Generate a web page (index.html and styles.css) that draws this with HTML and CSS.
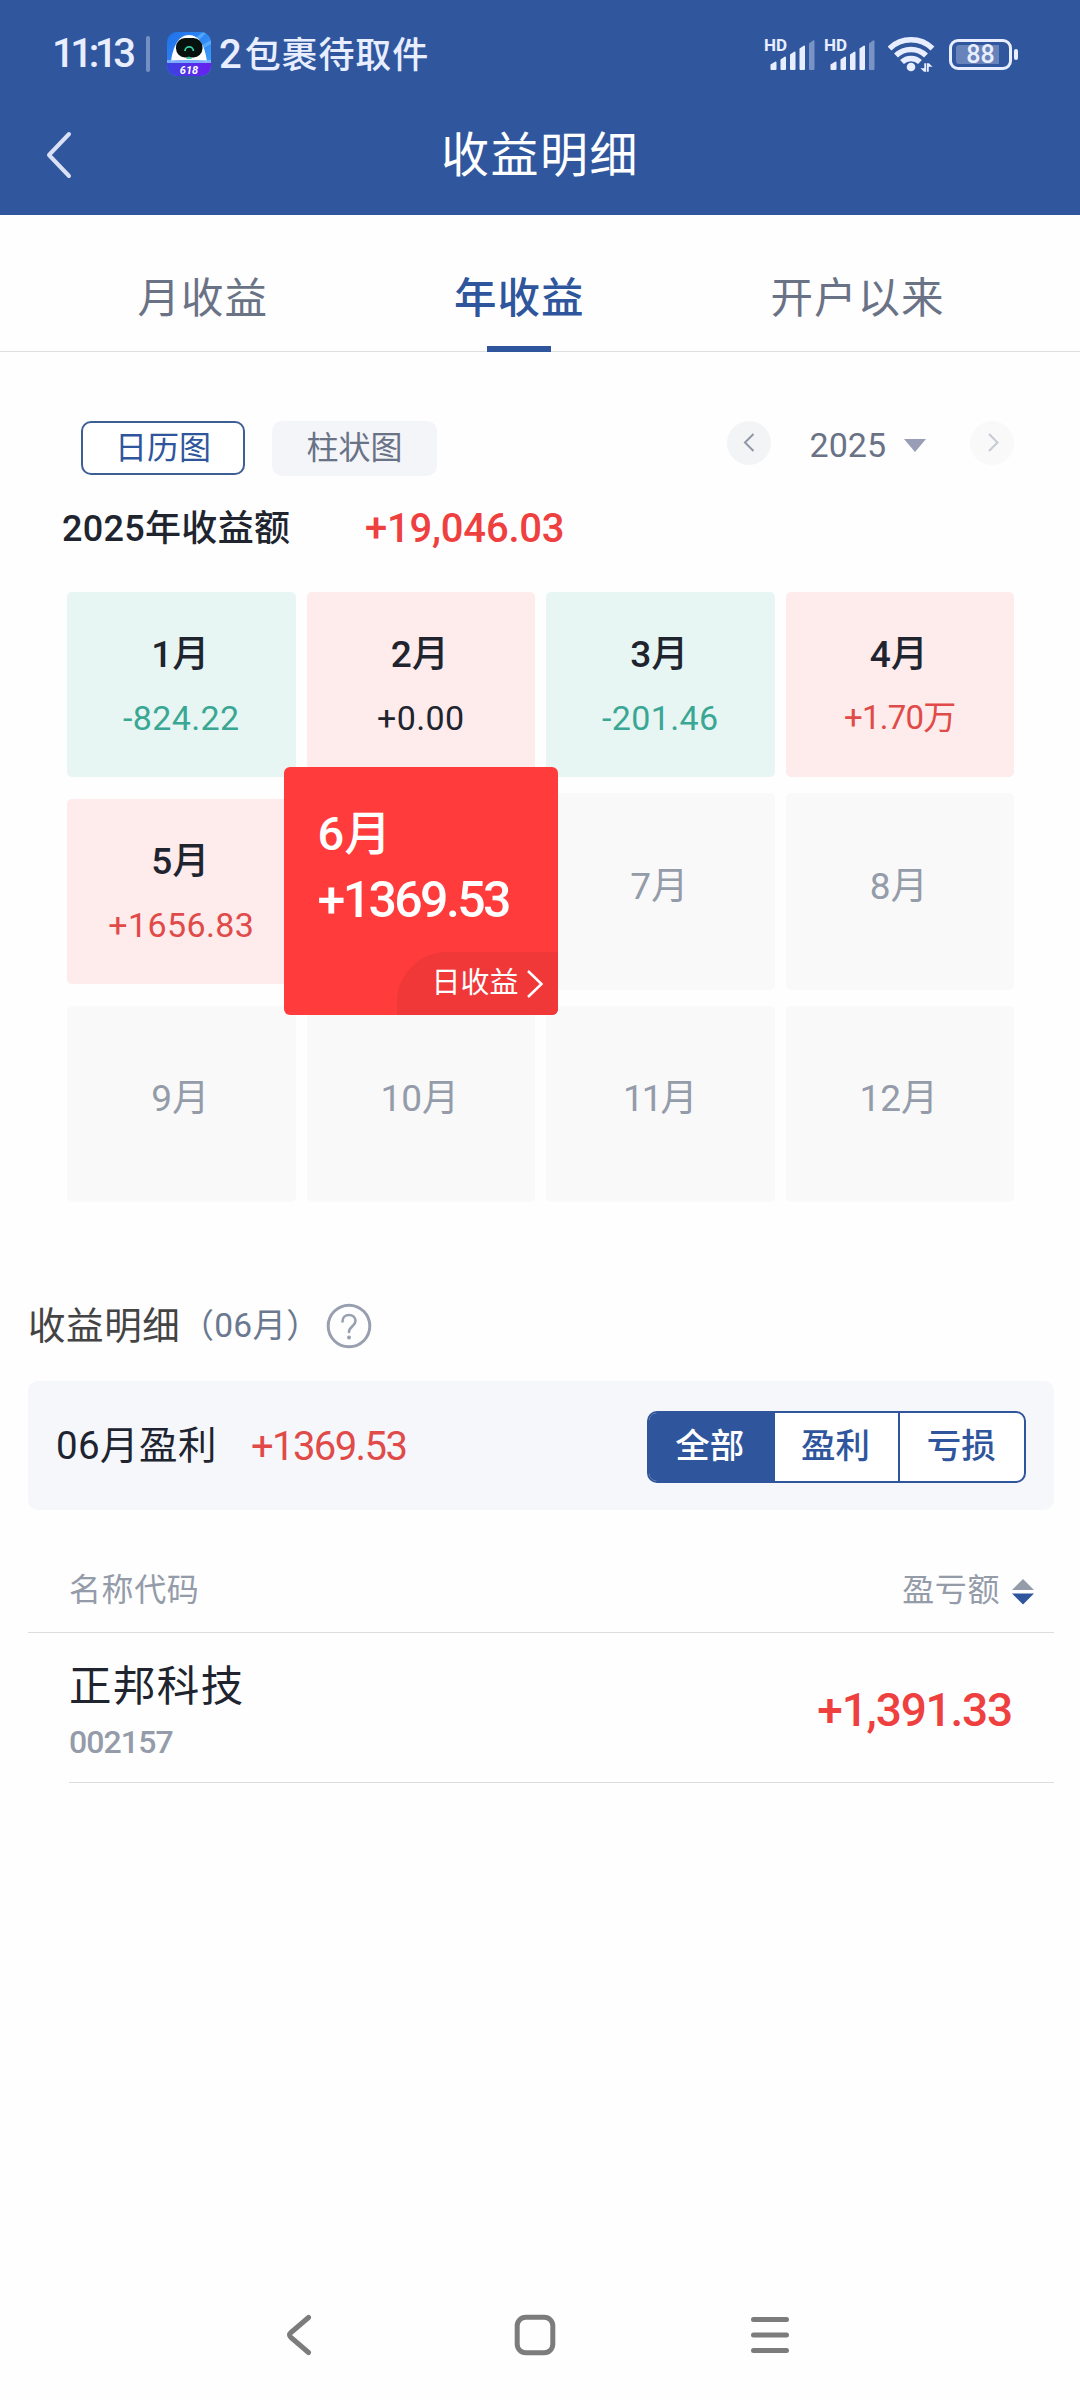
FILE: index.html
```html
<!DOCTYPE html>
<html lang="zh-CN">
<head>
  <meta charset="UTF-8">
  <meta name="viewport" content="width=device-width, initial-scale=1.0">
  <title>收益明细</title>
  <link rel="stylesheet" href="styles.css">
</head>
<body>

  <!-- Header -->
  <header class="header">
    <div class="status-bar">
      <span class="time">11:13</span>
      <span class="divider"></span>
      <svg class="app-icon" width="44" height="44" viewBox="0 0 44 44">
        <defs>
          <linearGradient id="sky" x1="0" y1="0" x2="1" y2="1">
            <stop offset="0" stop-color="#1f6fe8"/>
            <stop offset="1" stop-color="#3fa4ff"/>
          </linearGradient>
          <linearGradient id="band" x1="0" y1="0" x2="1" y2="0">
            <stop offset="0" stop-color="#3a43e0"/>
            <stop offset="1" stop-color="#6a1ff0"/>
          </linearGradient>
          <clipPath id="round"><rect width="44" height="44" rx="10"/></clipPath>
        </defs>
        <g clip-path="url(#round)">
          <rect width="44" height="44" fill="url(#sky)"/>
          <path d="M26 8L36 0h4L28 12zM34 14l10-6v4l-9 5z" fill="#6fbaff" opacity=".6"/>
          <path d="M4 30C5 21 7 16 9 12 12 6 17 3 22 3s10 3 13 9c2 4 4 9 5 18-5-2-10-2-18-2S9 28 4 30z" fill="#fff"/>
          <rect x="0" y="28" width="44" height="4" fill="#8fb4ff" opacity=".8"/>
          <rect x="9" y="6" width="26.500" height="19.500" rx="9" fill="#07120f"/>
          <path d="M18 19a4.200 4.200 0 0 1 8.400 0" fill="none" stroke="#33cfa5" stroke-width="1.800"/>
          <path d="M19 27q3-5 6 0z" fill="#33cfa5"/>
          <rect y="31" width="44" height="13" fill="url(#band)"/>
          <text x="22" y="41.500" class="app-icon-text">618</text>
        </g>
      </svg>
      <span class="notice"><span class="count">2</span>包裹待取件</span>

      <svg class="signal" width="52" height="46" viewBox="-2 -6 52 46">
        <text x="-1" y="13.500" class="hd">HD</text>
        <path d="M5.500 32v-4.500l5-3q1 0 1 1v6.500q0 1-1 1h-4q-1 0-1-1zM15.500 32v-9.500l4.500-3q1 0 1 1v11.500q0 1-1 1h-3.500q-1 0-1-1zM25 32V17.500l4.500-3q1 0 1 1v16.500q0 1-1 1H26q-1 0-1-1zM34.500 32V11.500l4.500-3q1 0 1 1v22.500q0 1-1 1h-3.500q-1 0-1-1z"/>
        <path d="M44 31.500V6.500l4-3q1.500-.5 1.500.5v28q0 1-1 1H45q-1 0-1-1z" opacity=".4"/>
      </svg>
      <svg class="signal second" width="52" height="46" viewBox="-2 -6 52 46">
        <text x="-1" y="13.500" class="hd">HD</text>
        <path d="M5.500 32v-4.500l5-3q1 0 1 1v6.500q0 1-1 1h-4q-1 0-1-1zM15.500 32v-9.500l4.500-3q1 0 1 1v11.500q0 1-1 1h-3.500q-1 0-1-1zM25 32V17.500l4.500-3q1 0 1 1v16.500q0 1-1 1H26q-1 0-1-1zM34.500 32V11.500l4.500-3q1 0 1 1v22.500q0 1-1 1h-3.500q-1 0-1-1z"/>
        <path d="M44 31.500V6.500l4-3q1.500-.5 1.500.5v28q0 1-1 1H45q-1 0-1-1z" opacity=".4"/>
      </svg>
      <svg class="wifi" width="47" height="36" viewBox="0 0 47 36">
        <g fill="none" stroke="#e8eeff" stroke-width="5.500">
          <path d="M1.500 12.500a31 31 0 0 1 43 0"/>
          <path d="M8 19.500a21.500 21.500 0 0 1 30 0"/>
          <path d="M14 26a13 13 0 0 1 18 0"/>
        </g>
        <circle cx="23" cy="31" r="4.300"/>
        <path d="M36 27h2.500v9H36l-4-4h4zM41 36h-2.500v-9H41l4 4h-4z" class="wifi-arrows"/>
      </svg>
      <span class="battery"><span class="battery-level"></span><span class="battery-text">88</span></span>
    </div>

    <div class="title-bar">
      <svg class="back" width="28" height="50" viewBox="0 0 28 50">
        <path d="M24 4L4 25l20 21" fill="none" stroke="#dbe1f4" stroke-width="4" stroke-linecap="round" stroke-linejoin="round"/>
      </svg>
      <h1>收益明细</h1>
    </div>
  </header>

  <!-- Tabs -->
  <nav class="tabs">
    <a class="tab">月收益</a>
    <a class="tab active">年收益</a>
    <a class="tab">开户以来</a>
  </nav>

  <!-- Calendar -->
  <section class="calendar">
    <div class="toolbar">
      <button class="view-btn active">日历图</button>
      <button class="view-btn">柱状图</button>
      <div class="year-picker">
        <span class="circle">
          <svg width="14" height="20" viewBox="0 0 14 20"><path d="M11.500 1L3 9.500l8.500 8.500" fill="none" stroke="#8f96a6" stroke-width="2"/></svg>
        </span>
        <span class="year">2025</span>
        <span class="caret"></span>
        <span class="circle disabled">
          <svg width="14" height="20" viewBox="0 0 14 20"><path d="M4 1l8.500 8.500L4 18" fill="none" stroke="#c6cad3" stroke-width="2"/></svg>
        </span>
      </div>
    </div>

    <div class="summary">
      <span class="summary-label">2025年收益额</span>
      <span class="summary-value">+19,046.03</span>
    </div>

    <div class="months">
      <div class="month loss"><b>1月</b><span>-824.22</span></div>
      <div class="month gain flat"><b>2月</b><span>+0.00</span></div>
      <div class="month loss"><b>3月</b><span>-201.46</span></div>
      <div class="month gain"><b>4月</b><span class="short">+1.70万</span></div>
      <div class="month gain"><b>5月</b><span>+1656.83</span></div>
      <div class="month-slot">
        <div class="month-selected">
          <b>6月</b>
          <span class="amount">+1369.53</span>
          <span class="daily">日收益
            <svg width="18" height="28" viewBox="0 0 18 28"><path d="M2 1l13.500 13L2 27" fill="none" stroke="#fff" stroke-width="2.500"/></svg>
          </span>
        </div>
      </div>
      <div class="month"><b>7月</b></div>
      <div class="month"><b>8月</b></div>
      <div class="month"><b>9月</b></div>
      <div class="month"><b>10月</b></div>
      <div class="month"><b class="tight">11月</b></div>
      <div class="month"><b>12月</b></div>
    </div>
  </section>

  <!-- Details -->
  <section class="details">
    <div class="details-title">
      <h2>收益明细</h2>
      <span class="period">（06月）</span>
      <svg class="help" width="46" height="46" viewBox="0 0 46 46">
        <circle cx="23" cy="23" r="20.800" fill="none" stroke="#98a0b0" stroke-width="3"/>
        <path d="M16.500 18.500c0-4 2.800-6.500 6.500-6.500s6.500 2.400 6.500 6c0 5-6.500 5.500-6.500 11" fill="none" stroke="#98a0b0" stroke-width="2.600" stroke-linecap="round"/>
        <circle cx="23" cy="34.500" r="2" fill="#98a0b0"/>
      </svg>
    </div>

    <div class="profit-card">
      <span class="profit-label">06月盈利</span>
      <span class="profit-value">+1369.53</span>
      <div class="segments">
        <span class="segment active">全部</span>
        <span class="segment">盈利</span>
        <span class="segment">亏损</span>
      </div>
    </div>

    <div class="table-head">
      <span>名称代码</span>
      <span class="sort">盈亏额
        <svg width="22" height="26" viewBox="0 0 22 26">
          <path d="M11 0l11 11H0z" fill="#949ba9"/>
          <path d="M0 14.500h22l-11 11z" fill="#2f569d"/>
        </svg>
      </span>
    </div>

    <div class="stock-row">
      <div>
        <div class="stock-name">正邦科技</div>
        <div class="stock-code">002157</div>
      </div>
      <span class="stock-value">+1,391.33</span>
    </div>
  </section>

  <!-- System Navigation -->
  <footer class="system-nav">
    <svg width="26" height="42" viewBox="0 0 26 42"><path d="M22.500 3.500L5 18.500q-3 2.500 0 5l17.500 15" fill="none" stroke="#7c7c7c" stroke-width="5" stroke-linecap="round"/></svg>
    <svg class="home" width="42" height="42" viewBox="0 0 42 42"><rect x="3.200" y="3.200" width="35.600" height="35.600" rx="8.500" fill="none" stroke="#7c7c7c" stroke-width="5"/></svg>
    <svg width="40" height="42" viewBox="0 0 40 42"><path d="M3.500 5.500h33M3.500 21h33M3.500 36.500h33" stroke="#7c7c7c" stroke-width="5" stroke-linecap="round"/></svg>
  </footer>

</body>
</html>
```
FILE: styles.css
```css
/* General Styles */
* {
  margin: 0;
  padding: 0;
  box-sizing: border-box;
}

body {
  width: 1080px;
  height: 2400px;
  display: flex;
  flex-direction: column;
  font-family: Roboto, "Noto Sans CJK SC", sans-serif;
  line-height: 1.2;
  background-color: #fefefe;
  color: #20242f;
  overflow: hidden;
}

svg {
  display: block;
  flex: none;
}

b,
h1,
h2 {
  font-weight: 400;
}

/* Header */
.header {
  height: 215px;
  background-color: #30579e;
  color: #fff;
}

.status-bar {
  display: flex;
  align-items: center;
  height: 108px;
  padding: 0 68px 0 52px;
  color: #e8eeff;
  fill: #e8eeff;
  white-space: nowrap;
}

.time {
  width: 94px;
  font-size: 40px;
  font-weight: 500;
  letter-spacing: -4.4px;
}

.divider {
  width: 4px;
  height: 36px;
  border-radius: 2px;
  background-color: #7590c4;
}

.app-icon {
  margin-left: 17px;
}

.app-icon-text {
  font: italic 700 11px Roboto, sans-serif;
  fill: #fff;
  text-anchor: middle;
}

.notice {
  margin-left: 8px;
  padding-top: 2px;
  font-size: 36px;
  font-weight: 500;
  letter-spacing: 0.9px;
}

.count {
  margin-right: 2px;
  font-size: 40px;
}

.signal {
  margin-left: auto;
}

.signal.second {
  margin-left: 8px;
}

.hd {
  font: 700 17px Roboto, sans-serif;
}

.wifi {
  margin-left: 13px;
}

.wifi-arrows {
  stroke: #30579e;
  stroke-width: 0.5;
}

.battery {
  position: relative;
  width: 63px;
  height: 31px;
  margin-left: 14px;
  border: 3px solid #e8eeff;
  border-radius: 9px;
  text-align: center;
}

.battery::after {
  content: "";
  position: absolute;
  right: -9px;
  top: 7px;
  width: 4px;
  height: 11px;
  border-radius: 2px;
  background-color: #e8eeff;
}

.battery-level {
  position: absolute;
  left: 4px;
  top: 3px;
  width: 43px;
  height: 19px;
  border-radius: 3px 0 0 3px;
  background-color: #6883ba;
}

.battery-text {
  position: relative;
  display: block;
  font-size: 25px;
  font-weight: 500;
  line-height: 26px;
}

.title-bar {
  position: relative;
  display: flex;
  align-items: center;
  justify-content: center;
  height: 95px;
}

.title-bar h1 {
  font-size: 48px;
  letter-spacing: 1.5px;
}

.back {
  position: absolute;
  left: 45px;
  top: 22px;
}

/* Tabs */
.tabs {
  display: flex;
  justify-content: center;
  gap: 186px;
  height: 137px;
  padding: 54px 0 0 2px;
  border-bottom: 1px solid #dedfe2;
}

.tab {
  position: relative;
  font-size: 42.5px;
  letter-spacing: 1px;
  line-height: 60px;
  color: #6a7286;
}

.tab.active {
  color: #2f569d;
  font-weight: 500;
}

.tab.active::after {
  content: "";
  position: absolute;
  left: 50%;
  bottom: -1px;
  width: 64px;
  height: 6px;
  margin-left: -32px;
  background-color: #2f569d;
}

/* Calendar */
.calendar {
  padding: 69px 66px 0 67px;
}

.toolbar {
  display: flex;
  height: 55px;
  padding-left: 14px;
}

.view-btn {
  width: 165px;
  height: 55px;
  margin-right: 26px;
  border: none;
  border-radius: 10px;
  background-color: #f3f5f8;
  font-family: inherit;
  font-size: 32px;
  line-height: 51px;
  color: #6a7286;
}

.view-btn.active {
  width: 164px;
  height: 54px;
  margin-right: 27px;
  border: 2px solid #3d5f94;
  background-color: #fff;
  color: #2f569d;
  line-height: 48px;
}

.year-picker {
  display: flex;
  align-items: center;
  height: 44px;
  margin-left: auto;
}

.circle {
  display: flex;
  align-items: center;
  justify-content: center;
  width: 44px;
  height: 44px;
  border-radius: 50%;
  background-color: #f2f4f6;
}

.circle.disabled {
  margin-left: 44px;
  background-color: #f9f9fa;
}

.year {
  margin-left: 39px;
  font-size: 34px;
  line-height: 50px;
  padding-top: 4px;
  color: #6a7286;
}

.caret {
  margin: 4px 0 0 18px;
  border: 11px solid transparent;
  border-top: 13px solid #999eb6;
  border-bottom: none;
}

.summary {
  display: flex;
  height: 116px;
  padding: 25px 0 35px;
  margin-left: -5px;
  line-height: 56px;
  font-weight: 500;
}

.summary-label {
  width: 303px;
  font-size: 36px;
  letter-spacing: 0.3px;
}

.summary-value {
  font-size: 40px;
  letter-spacing: -0.2px;
  color: #ee403f;
}

.months {
  display: grid;
  grid-template-columns: repeat(4, 1fr);
  grid-template-rows: 185px 197px 196px;
  gap: 16px 11px;
}

.month {
  display: flex;
  flex-direction: column;
  align-items: center;
  justify-content: center;
  padding: 0 2px 10px 0;
  border-radius: 5px;
  background-color: #f9f9f9;
  color: #949ba9;
}

.month b {
  font-size: 37px;
  line-height: 54px;
}

.month .tight {
  letter-spacing: -2px;
}

.month span {
  margin: 9px 0 0 2px;
  font-size: 34px;
  letter-spacing: 0.4px;
  line-height: 54px;
}

.month .short {
  font-size: 33px;
  letter-spacing: -0.8px;
}

.month.loss,
.month.gain {
  width: 100%;
  height: 185px;
  align-self: center;
  justify-content: flex-start;
  padding-top: 36px;
}

.month.loss b,
.month.gain b {
  color: #20242f;
  font-weight: 500;
}

.month.loss {
  background-color: #e7f6f3;
  color: #39a793;
}

.month.gain {
  background-color: #feebeb;
  color: #e04a48;
}

.month.flat {
  color: #20242f;
}

.month-slot {
  position: relative;
}

/* Enlarged card over its neighbours */
.month-selected {
  position: absolute;
  left: -23px;
  top: -26px;
  width: 274px;
  height: 248px;
  padding: 34px 0 0 34px;
  border-radius: 6px;
  background-color: #ff3b3b;
  color: #fff;
  overflow: hidden;
}

.month-selected b,
.month-selected .amount {
  display: block;
  font-size: 47px;
  font-weight: 500;
  line-height: 66px;
}

.month-selected .amount {
  font-size: 50px;
  letter-spacing: -2.6px;
}

.daily {
  position: absolute;
  right: 0;
  bottom: 0;
  display: flex;
  align-items: center;
  gap: 7px;
  width: 161px;
  height: 63px;
  padding-left: 35px;
  border-top-left-radius: 50px;
  background-color: #f03839;
  font-size: 29px;
}

/* Details */
.details {
  padding: 0 26px 0 28px;
}

.details-title {
  display: flex;
  align-items: center;
  height: 179px;
  padding-top: 69px;
}

.details-title h2 {
  font-size: 37.5px;
  letter-spacing: 0.6px;
  color: #444;
}

.period {
  font-size: 33.5px;
  letter-spacing: 0.3px;
  color: #6a7890;
}

.help {
  margin-left: 6px;
}

.profit-card {
  display: flex;
  align-items: center;
  height: 129px;
  padding: 2px 28px 0;
  border-radius: 10px;
  background-color: #f5f7fb;
}

.profit-label {
  width: 195px;
  font-size: 38.5px;
  letter-spacing: 0.4px;
}

.profit-value {
  font-size: 40px;
  letter-spacing: -1.6px;
  color: #e04a48;
}

.segments {
  display: flex;
  width: 379px;
  height: 72px;
  margin-left: auto;
  border: 2px solid #2f569d;
  border-radius: 10px;
  background-color: #fff;
  overflow: hidden;
}

.segment {
  flex: 1;
  padding-right: 2px;
  border-left: 2px solid #2f569d;
  text-align: center;
  font-size: 34.5px;
  font-weight: 500;
  line-height: 67px;
  color: #2f569d;
}

.segment.active {
  border-left: none;
  background-color: #2f569d;
  color: #fff;
}

.table-head {
  display: flex;
  align-items: center;
  justify-content: space-between;
  height: 123px;
  padding: 38px 20px 0 41px;
  border-bottom: 1px solid #dcdde0;
  font-size: 32px;
  letter-spacing: 0.6px;
  color: #949ba9;
}

.sort {
  display: flex;
  align-items: center;
  gap: 12px;
}

.sort svg {
  margin-top: 5px;
}

.stock-row {
  display: flex;
  align-items: center;
  justify-content: space-between;
  height: 150px;
  margin-left: 41px;
  padding: 6px 42px 0 0;
  border-bottom: 1px solid #dcdde0;
}

.stock-name {
  font-size: 42.5px;
  letter-spacing: 1.4px;
  line-height: 62px;
}

.stock-code {
  font-size: 32px;
  font-weight: 500;
  line-height: 48px;
  letter-spacing: -0.9px;
  color: #949ba9;
}

.stock-value {
  font-size: 46px;
  font-weight: 500;
  letter-spacing: -1.2px;
  color: #ee403f;
}

/* System Navigation */
.system-nav {
  display: flex;
  justify-content: space-between;
  align-items: flex-start;
  height: 86px;
  margin-top: auto;
  padding: 0 290px 0 286px;
}

.home {
  margin-left: 7px;
}
```
